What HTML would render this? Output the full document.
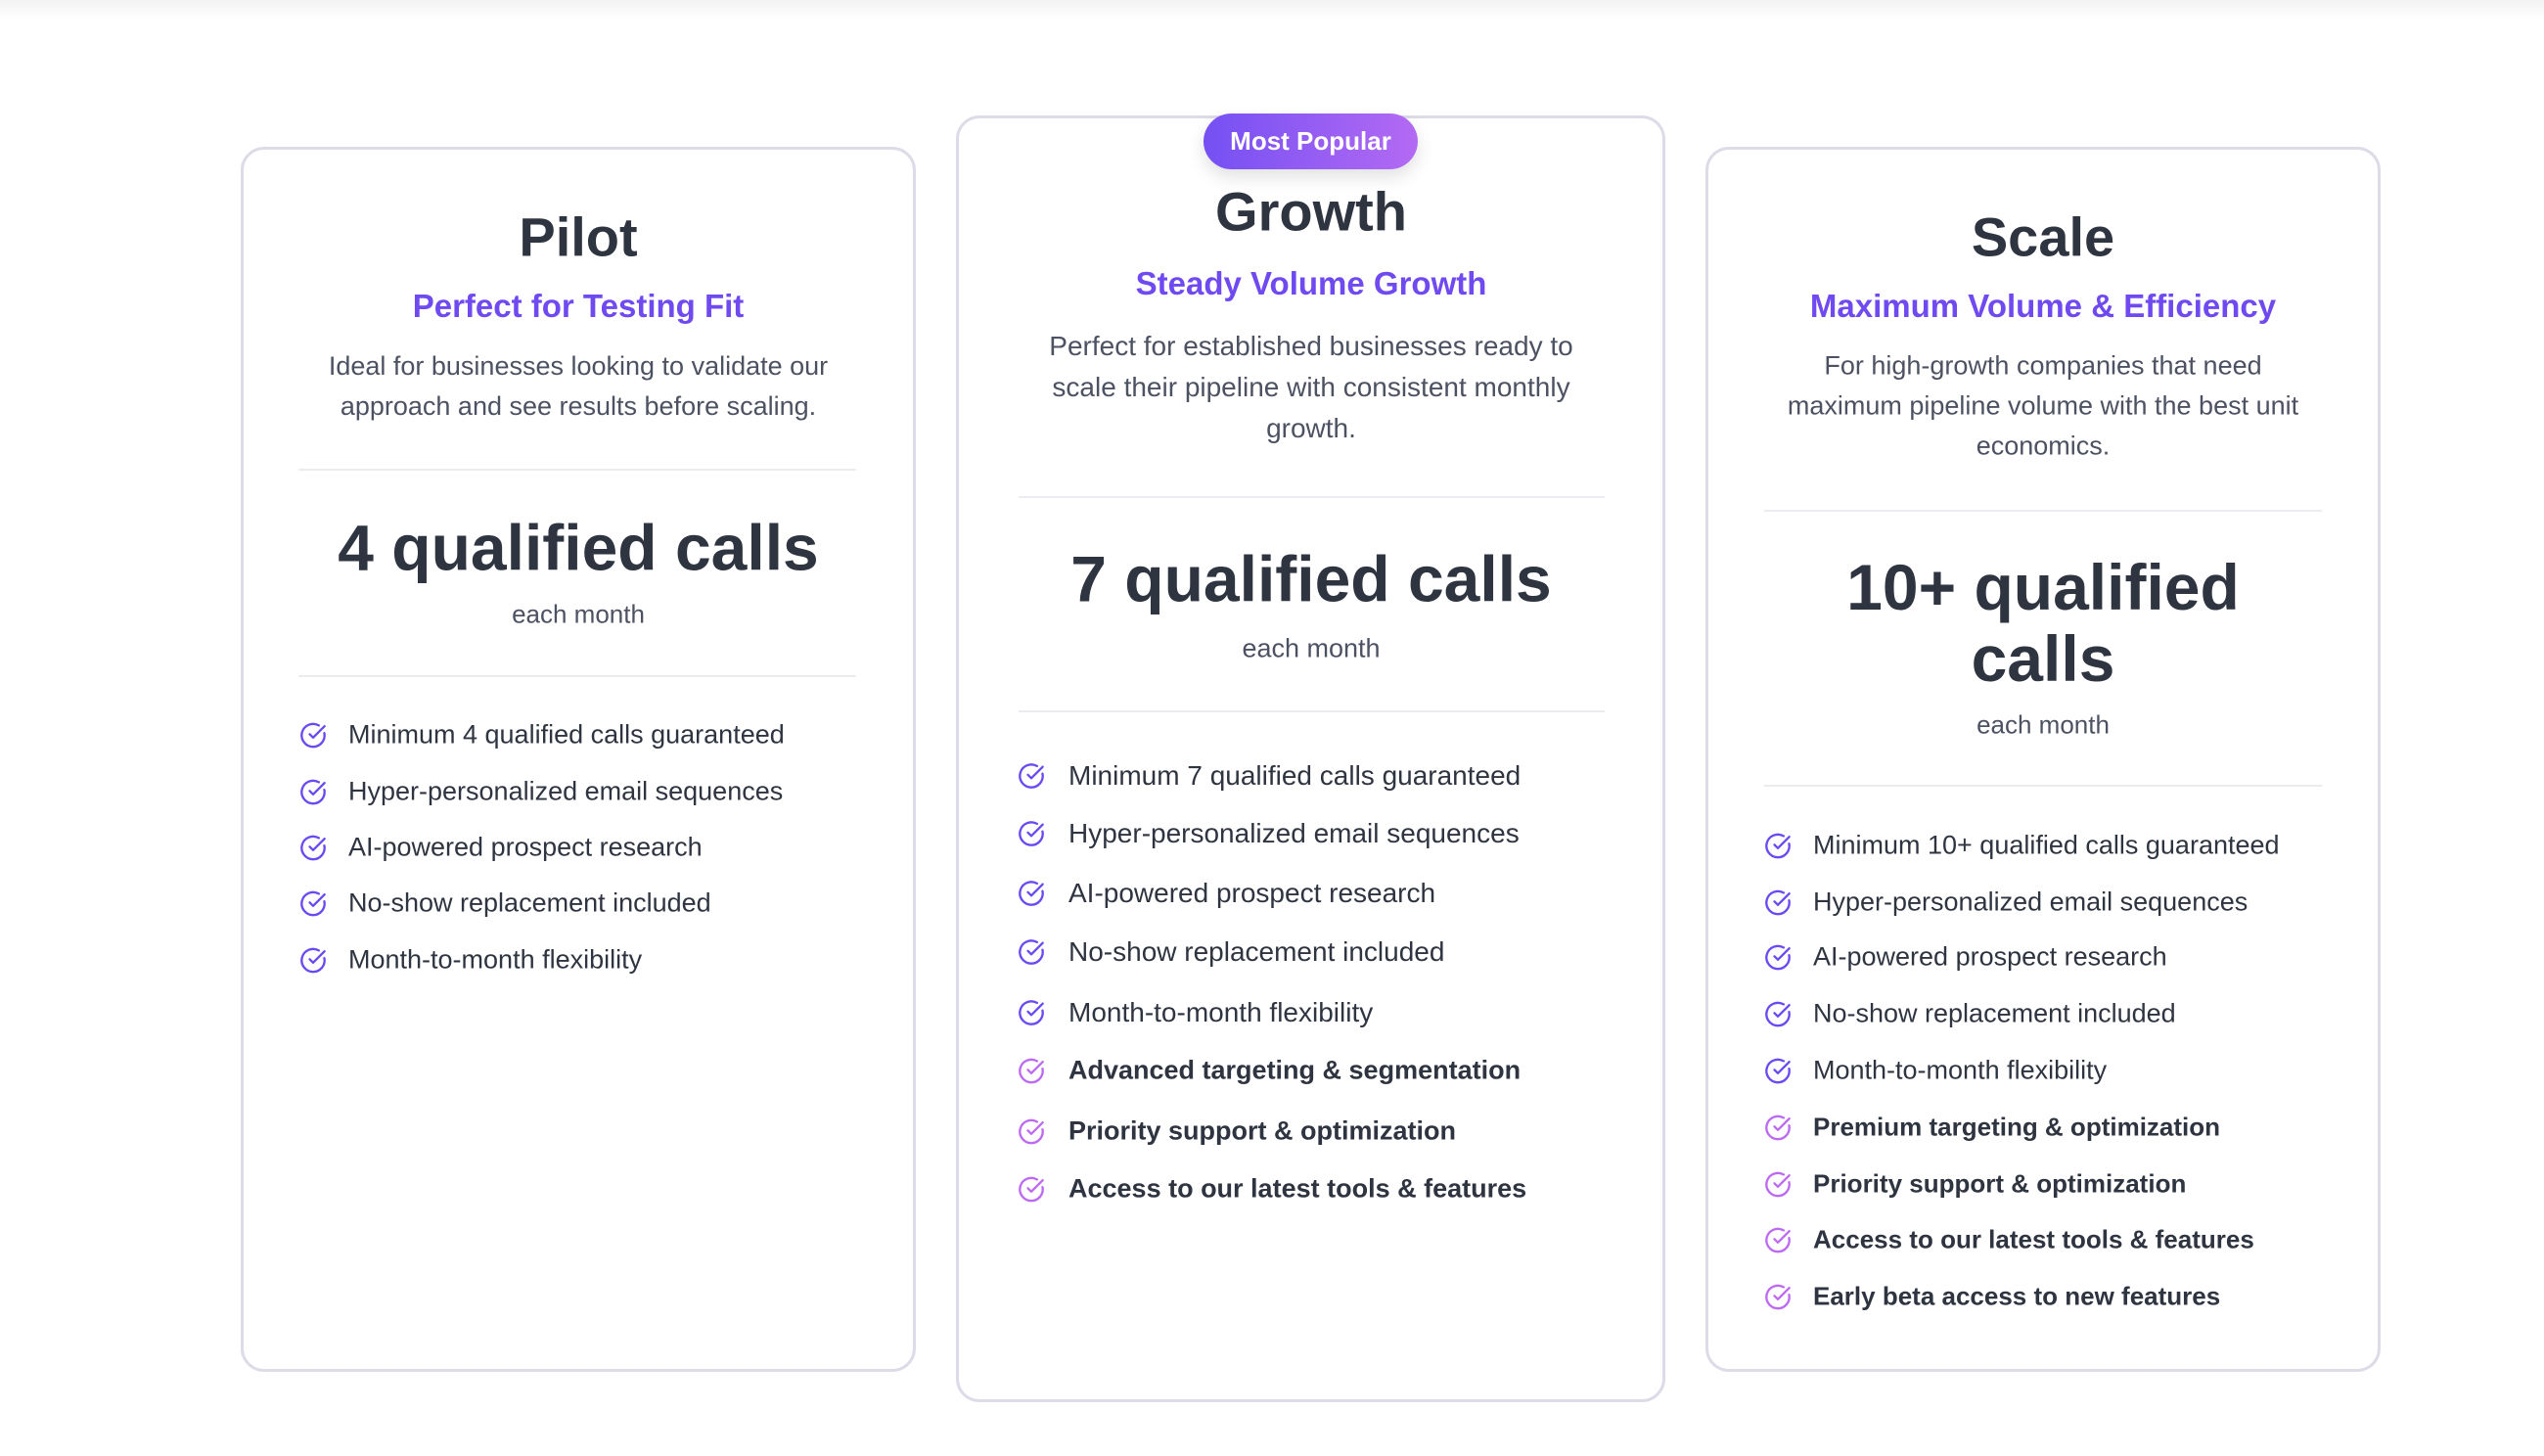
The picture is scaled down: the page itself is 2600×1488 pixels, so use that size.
<!DOCTYPE html>
<html><head><meta charset="utf-8"><style>
*{margin:0;padding:0;box-sizing:border-box}
body{width:2600px;height:1488px;background:#fff;position:relative;overflow:hidden;font-family:"Liberation Sans",sans-serif;color:#2f3540}
.top{position:absolute;left:0;top:0;width:100%;height:20px;background:linear-gradient(#f2f2f2,#fff)}
.card{position:absolute;border:3px solid #dddbe8;border-radius:24px;background:#fff}
.t{position:absolute;white-space:nowrap;transform:translate(-50%,-50%);text-align:center}
.title{font-size:56px;font-weight:700;color:#2f3540}
.sub{font-size:33px;font-weight:700;color:#6f4af0}
.desc{font-size:27px;color:#4d5262;line-height:41px}
.big{font-size:66px;font-weight:700;color:#2f3540;line-height:73px}
.em{font-size:26px;color:#4d5262}
.hr{position:absolute;height:2px;background:#ececf0}
.f{position:absolute;white-space:nowrap;transform:translateY(-50%);font-size:27px;color:#2f3540;display:flex;align-items:center}
.f svg{width:28px;height:28px;margin-right:22px;flex:none}
.f.g{font-size:28px}
.f.g svg{margin-right:24px}
.f.b{font-weight:700;font-size:26px}
.f.g.b{font-size:27px}
.badge{position:absolute;left:1230px;top:116px;width:219px;height:57px;border-radius:29px;background:linear-gradient(90deg,#7550f3,#b36af3);color:#fff;font-size:26px;font-weight:700;display:flex;align-items:center;justify-content:center;box-shadow:0 8px 18px rgba(0,0,0,0.12)}
</style></head><body>
<div class="top"></div>
<svg width="0" height="0" style="position:absolute"><defs>
<symbol id="ck" viewBox="0 0 24 24"><path d="M21.8 10A10 10 0 1 1 17 3.34" fill="none" stroke="currentColor" stroke-width="2" stroke-linecap="round"/><path d="m9 11 3 3L22 4" fill="none" stroke="currentColor" stroke-width="2" stroke-linecap="round" stroke-linejoin="round"/></symbol>
</defs></svg>

<div class="card" style="left:246px;top:150px;width:690px;height:1252px"></div>
<div class="card" style="left:977px;top:118px;width:725px;height:1315px"></div>
<div class="card" style="left:1743px;top:150px;width:690px;height:1252px"></div>
<div class="badge">Most Popular</div>

<!-- Pilot -->
<div class="t title" style="left:591px;top:242px">Pilot</div>
<div class="t sub" style="left:591px;top:313px">Perfect for Testing Fit</div>
<div class="t desc" style="left:591px;top:395px">Ideal for businesses looking to validate our<br>approach and see results before scaling.</div>
<div class="hr" style="left:305px;width:570px;top:479px"></div>
<div class="t big" style="left:591px;top:560px">4 qualified calls</div>
<div class="t em" style="left:591px;top:628px">each month</div>
<div class="hr" style="left:305px;width:570px;top:690px"></div>
<div class="f" style="left:306px;top:751px;"><svg style="color:#6a4af2"><use href="#ck"/></svg>Minimum 4 qualified calls guaranteed</div>
<div class="f" style="left:306px;top:809px;"><svg style="color:#6a4af2"><use href="#ck"/></svg>Hyper-personalized email sequences</div>
<div class="f" style="left:306px;top:866px;"><svg style="color:#6a4af2"><use href="#ck"/></svg>AI-powered prospect research</div>
<div class="f" style="left:306px;top:923px;"><svg style="color:#6a4af2"><use href="#ck"/></svg>No-show replacement included</div>
<div class="f" style="left:306px;top:981px;"><svg style="color:#6a4af2"><use href="#ck"/></svg>Month-to-month flexibility</div>

<!-- Growth -->
<div class="t title" style="left:1340px;top:216px">Growth</div>
<div class="t sub" style="left:1340px;top:290px">Steady Volume Growth</div>
<div class="t desc" style="left:1340px;top:396px;line-height:42px;font-size:28px">Perfect for established businesses ready to<br>scale their pipeline with consistent monthly<br>growth.</div>
<div class="hr" style="left:1041px;width:599px;top:507px"></div>
<div class="t big" style="left:1340px;top:592px">7 qualified calls</div>
<div class="t em" style="left:1340px;top:663px;font-size:27px">each month</div>
<div class="hr" style="left:1041px;width:599px;top:726px"></div>
<div class="f g" style="left:1040px;top:793px;"><svg style="color:#6a4af2"><use href="#ck"/></svg>Minimum 7 qualified calls guaranteed</div>
<div class="f g" style="left:1040px;top:852px;"><svg style="color:#6a4af2"><use href="#ck"/></svg>Hyper-personalized email sequences</div>
<div class="f g" style="left:1040px;top:913px;"><svg style="color:#6a4af2"><use href="#ck"/></svg>AI-powered prospect research</div>
<div class="f g" style="left:1040px;top:973px;"><svg style="color:#6a4af2"><use href="#ck"/></svg>No-show replacement included</div>
<div class="f g" style="left:1040px;top:1035px;"><svg style="color:#6a4af2"><use href="#ck"/></svg>Month-to-month flexibility</div>
<div class="f g b" style="left:1040px;top:1094px;"><svg style="color:#bd6af2"><use href="#ck"/></svg>Advanced targeting &amp; segmentation</div>
<div class="f g b" style="left:1040px;top:1156px;"><svg style="color:#bd6af2"><use href="#ck"/></svg>Priority support &amp; optimization</div>
<div class="f g b" style="left:1040px;top:1215px;"><svg style="color:#bd6af2"><use href="#ck"/></svg>Access to our latest tools &amp; features</div>

<!-- Scale -->
<div class="t title" style="left:2088px;top:242px">Scale</div>
<div class="t sub" style="left:2088px;top:313px">Maximum Volume &amp; Efficiency</div>
<div class="t desc" style="left:2088px;top:415px">For high-growth companies that need<br>maximum pipeline volume with the best unit<br>economics.</div>
<div class="hr" style="left:1803px;width:570px;top:521px"></div>
<div class="t big" style="left:2088px;top:637px">10+ qualified<br>calls</div>
<div class="t em" style="left:2088px;top:741px">each month</div>
<div class="hr" style="left:1803px;width:570px;top:802px"></div>
<div class="f" style="left:1803px;top:864px;"><svg style="color:#6a4af2"><use href="#ck"/></svg>Minimum 10+ qualified calls guaranteed</div>
<div class="f" style="left:1803px;top:922px;"><svg style="color:#6a4af2"><use href="#ck"/></svg>Hyper-personalized email sequences</div>
<div class="f" style="left:1803px;top:978px;"><svg style="color:#6a4af2"><use href="#ck"/></svg>AI-powered prospect research</div>
<div class="f" style="left:1803px;top:1036px;"><svg style="color:#6a4af2"><use href="#ck"/></svg>No-show replacement included</div>
<div class="f" style="left:1803px;top:1094px;"><svg style="color:#6a4af2"><use href="#ck"/></svg>Month-to-month flexibility</div>
<div class="f b" style="left:1803px;top:1152px;"><svg style="color:#bd6af2"><use href="#ck"/></svg>Premium targeting &amp; optimization</div>
<div class="f b" style="left:1803px;top:1210px;"><svg style="color:#bd6af2"><use href="#ck"/></svg>Priority support &amp; optimization</div>
<div class="f b" style="left:1803px;top:1267px;"><svg style="color:#bd6af2"><use href="#ck"/></svg>Access to our latest tools &amp; features</div>
<div class="f b" style="left:1803px;top:1325px;"><svg style="color:#bd6af2"><use href="#ck"/></svg>Early beta access to new features</div>
</body></html>
